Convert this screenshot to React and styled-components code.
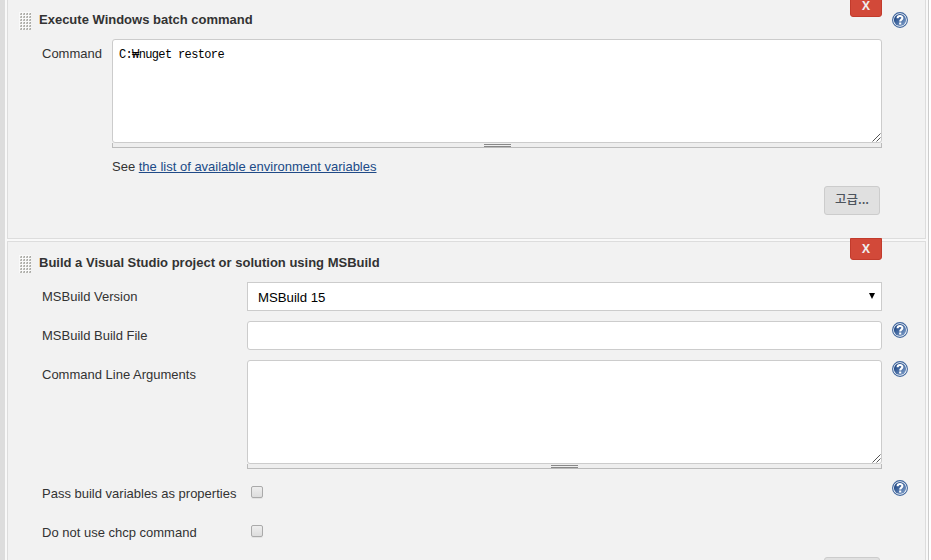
import React from "react";
import styled, { createGlobalStyle } from "styled-components";

const Global = createGlobalStyle`
  *, *::before, *::after { box-sizing: border-box; }
  html, body { margin: 0; padding: 0; overflow: hidden; }
  body { background: #fff; font: 13px/20px "Liberation Sans", Arial, sans-serif; color: #333; }
`;
const Page = styled.main`
  width: 929px; height: 560px; overflow: hidden;
  background: #f9f9f9;
  border-left: 5px solid #ddd;
  border-right: 1px solid #ccc;
  padding: 0 2px;
`;
const Step = styled.section`
  position: relative;
  width: 919px;
  height: ${(p) => p.$height}px;
  margin-top: ${(p) => p.$top}px;
  background: #f2f2f2;
  border: 1px solid #ddd;
  padding: 10px 0 0 12px;
`;
const Heading = styled.header`
  display: flex; height: 30px;
`;
const Grip = styled.svg`
  flex: none; width: 12px; height: 18px; margin: 3px 8px 0 -1px;
`;
const Title = styled.h2`
  flex: none; width: 853px; margin: 0; padding-top: 1px;
  font-size: 13px; line-height: 20px; font-weight: bold; color: #333;
`;
const Delete = styled.button`
  position: absolute; left: 842px; top: -4px;
  width: 32px; height: 22px; padding: 0;
  background: #d24939; border: 1px solid #c23b2c; border-radius: 0 0 3px 3px;
  color: #eee; font: bold 12px/20px "Open Sans", Arial, sans-serif;
`;
const Row = styled.div`
  display: grid;
  grid-template-columns: ${(p) => p.$label}px ${(p) => 850 - p.$label}px 16px;
  padding-left: 22px;
  margin-bottom: 10px;
  min-height: ${(p) => p.$height || 29}px;
`;
const Label = styled.label`
  padding-top: 5px; white-space: nowrap;
`;
const Help = styled.svg`
  display: block; flex: none; width: 16px; height: 16px; margin-top: ${(p) => p.$top}px;
`;
const Control = styled.div`width: ${(p) => p.$width}px;`;
const Area = styled.textarea`
  display: block; width: 100%; height: 104px; margin: 0; padding: 5px 6px;
  border: 1px solid #ccc; border-radius: 3px; background: #fff; color: #000;
  font: 12px/20px "Liberation Mono", "Noto Sans CJK KR", monospace;
  letter-spacing: -0.64px; resize: none;
`;
const AreaWrap = styled.div`position: relative;`;
const Corner = styled.svg`
  position: absolute; right: 1px; bottom: 1px; width: 9px; height: 9px;
`;
const Handle = styled.div`
  height: 5px; background: #eee;
  border: solid #bbb; border-width: 0 1px 1px;
  display: flex; justify-content: center; padding-top: 1px;
`;
const HandleMark = styled.span`
  width: 27px; height: 3px; border: solid #888; border-width: 1px 0;
`;
const Note = styled.p`
  margin: -1px 0 0 92px; height: 29px;
`;
const Link = styled.a`color: #204a87; text-decoration: underline;`;
const Advanced = styled.button`
  display: block; width: 56px; height: 29px; margin: 0 0 0 804px; padding: 0 0 4px;
  background: #e0e0e0; border: 1px solid #ccc; border-radius: 3px; color: #4d545d;
  font: 500 12.5px/20px "Noto Sans CJK KR", sans-serif;
`;
const Select = styled.div`
  display: flex; align-items: center; justify-content: space-between;
  height: 29px; padding: 2px 5px 0 10px;
  background: #fff; border: 1px solid #ccc; color: #000; font-size: 13.2px;
`;
const Arrow = styled.svg`width: 8px; height: 8px; margin-top: -3px;`;
const Input = styled.input`
  display: block; width: 100%; height: 29px; margin: 0; padding: 0 6px;
  background: #fff; border: 1px solid #ccc; border-radius: 3px;
`;
const Check = styled.input.attrs({ type: "checkbox" })`
  appearance: none; display: block; width: 12px; height: 12px; margin: 7px 0 0 4px;
  border: 1px solid #aaa; border-radius: 2px;
  background: linear-gradient(#eee, #ddd);
  box-shadow: 0 1px 0 rgba(0, 0, 0, 0.06);
`;

const GripIcon = () => (
  <Grip viewBox="0 0 12 18" shapeRendering="crispEdges">
    <rect width="12" height="18" fill="#fafafa" />
    {[0, 3, 6, 9].flatMap((x) =>
      [0, 3, 6, 9, 12, 15].map((y) => (
        <g key={`${x}-${y}`}>
          <rect x={x + 1} y={y + 1} width="2" height="2" fill="#d2d2ce" />
          <rect x={x + 2} y={y + 1} width="1" height="1" fill="#a6a6a2" />
          <rect x={x + 1} y={y + 2} width="2" height="1" fill="#b8b8b4" />
        </g>
      ))
    )}
  </Grip>
);

const HelpIcon = ({ top = 1 }) => (
  <Help viewBox="0 0 16 16" $top={top} aria-label="Help">
    <defs>
      <linearGradient id="ball" x1="0" y1="0" x2="1" y2="1">
        <stop offset="0.2" stopColor="#234b88" />
        <stop offset="1" stopColor="#86a5cf" />
      </linearGradient>
    </defs>
    <circle cx="8" cy="8" r="7.4" fill="#fff" stroke="#3e659d" strokeWidth="1.1" />
    <circle cx="8" cy="8" r="6.1" fill="url(#ball)" />
    <path d="M5.6 6.2C5.6 3.2 10.4 3.3 10.4 6C10.4 7.7 8.2 7.5 8.2 9.5M8.2 10.6V12.6" fill="none" stroke="#fff" strokeWidth="2.1" />
  </Help>
);

const ResizableArea = ({ value }) => (
  <>
    <AreaWrap>
      <Area readOnly spellCheck={false} defaultValue={value} />
      <Corner viewBox="0 0 9 9">
        <path d="M0.5 8.5L8.5 0.5M4.5 8.5L8.5 4.5" stroke="#555" strokeWidth="1" />
      </Corner>
    </AreaWrap>
    <Handle><HandleMark /></Handle>
  </>
);

export default function App() {
  return (
    <>
      <Global />
      <Page>
        <Step $height={241} $top={-2}>
          <Delete>X</Delete>
          <Heading>
            <GripIcon />
            <Title>Execute Windows batch command</Title>
            <HelpIcon top={3} />
          </Heading>
          <Row $label={70} $height={109}>
            <Label>Command</Label>
            <Control $width={770}><ResizableArea value="C:₩nuget restore" /></Control>
          </Row>
          <Note>See <Link>the list of available environment variables</Link></Note>
          <Advanced>고급...</Advanced>
        </Step>
        <Step $height={360} $top={2}>
          <Delete>X</Delete>
          <Heading>
            <GripIcon />
            <Title>Build a Visual Studio project or solution using MSBuild</Title>
          </Heading>
          <Row $label={205}>
            <Label>MSBuild Version</Label>
            <Control $width={635}>
              <Select>MSBuild 15<Arrow viewBox="0 0 8 8"><path d="M1 1H7L4 7Z" /></Arrow></Select>
            </Control>
          </Row>
          <Row $label={205}>
            <Label>MSBuild Build File</Label>
            <Control $width={635}><Input /></Control>
            <HelpIcon />
          </Row>
          <Row $label={205} $height={109}>
            <Label>Command Line Arguments</Label>
            <Control $width={635}><ResizableArea value="" /></Control>
            <HelpIcon />
          </Row>
          <Row $label={205}>
            <Label>Pass build variables as properties</Label>
            <Check />
            <HelpIcon />
          </Row>
          <Row $label={205}>
            <Label>Do not use chcp command</Label>
            <Check />
          </Row>
          <Advanced />
        </Step>
      </Page>
    </>
  );
}
